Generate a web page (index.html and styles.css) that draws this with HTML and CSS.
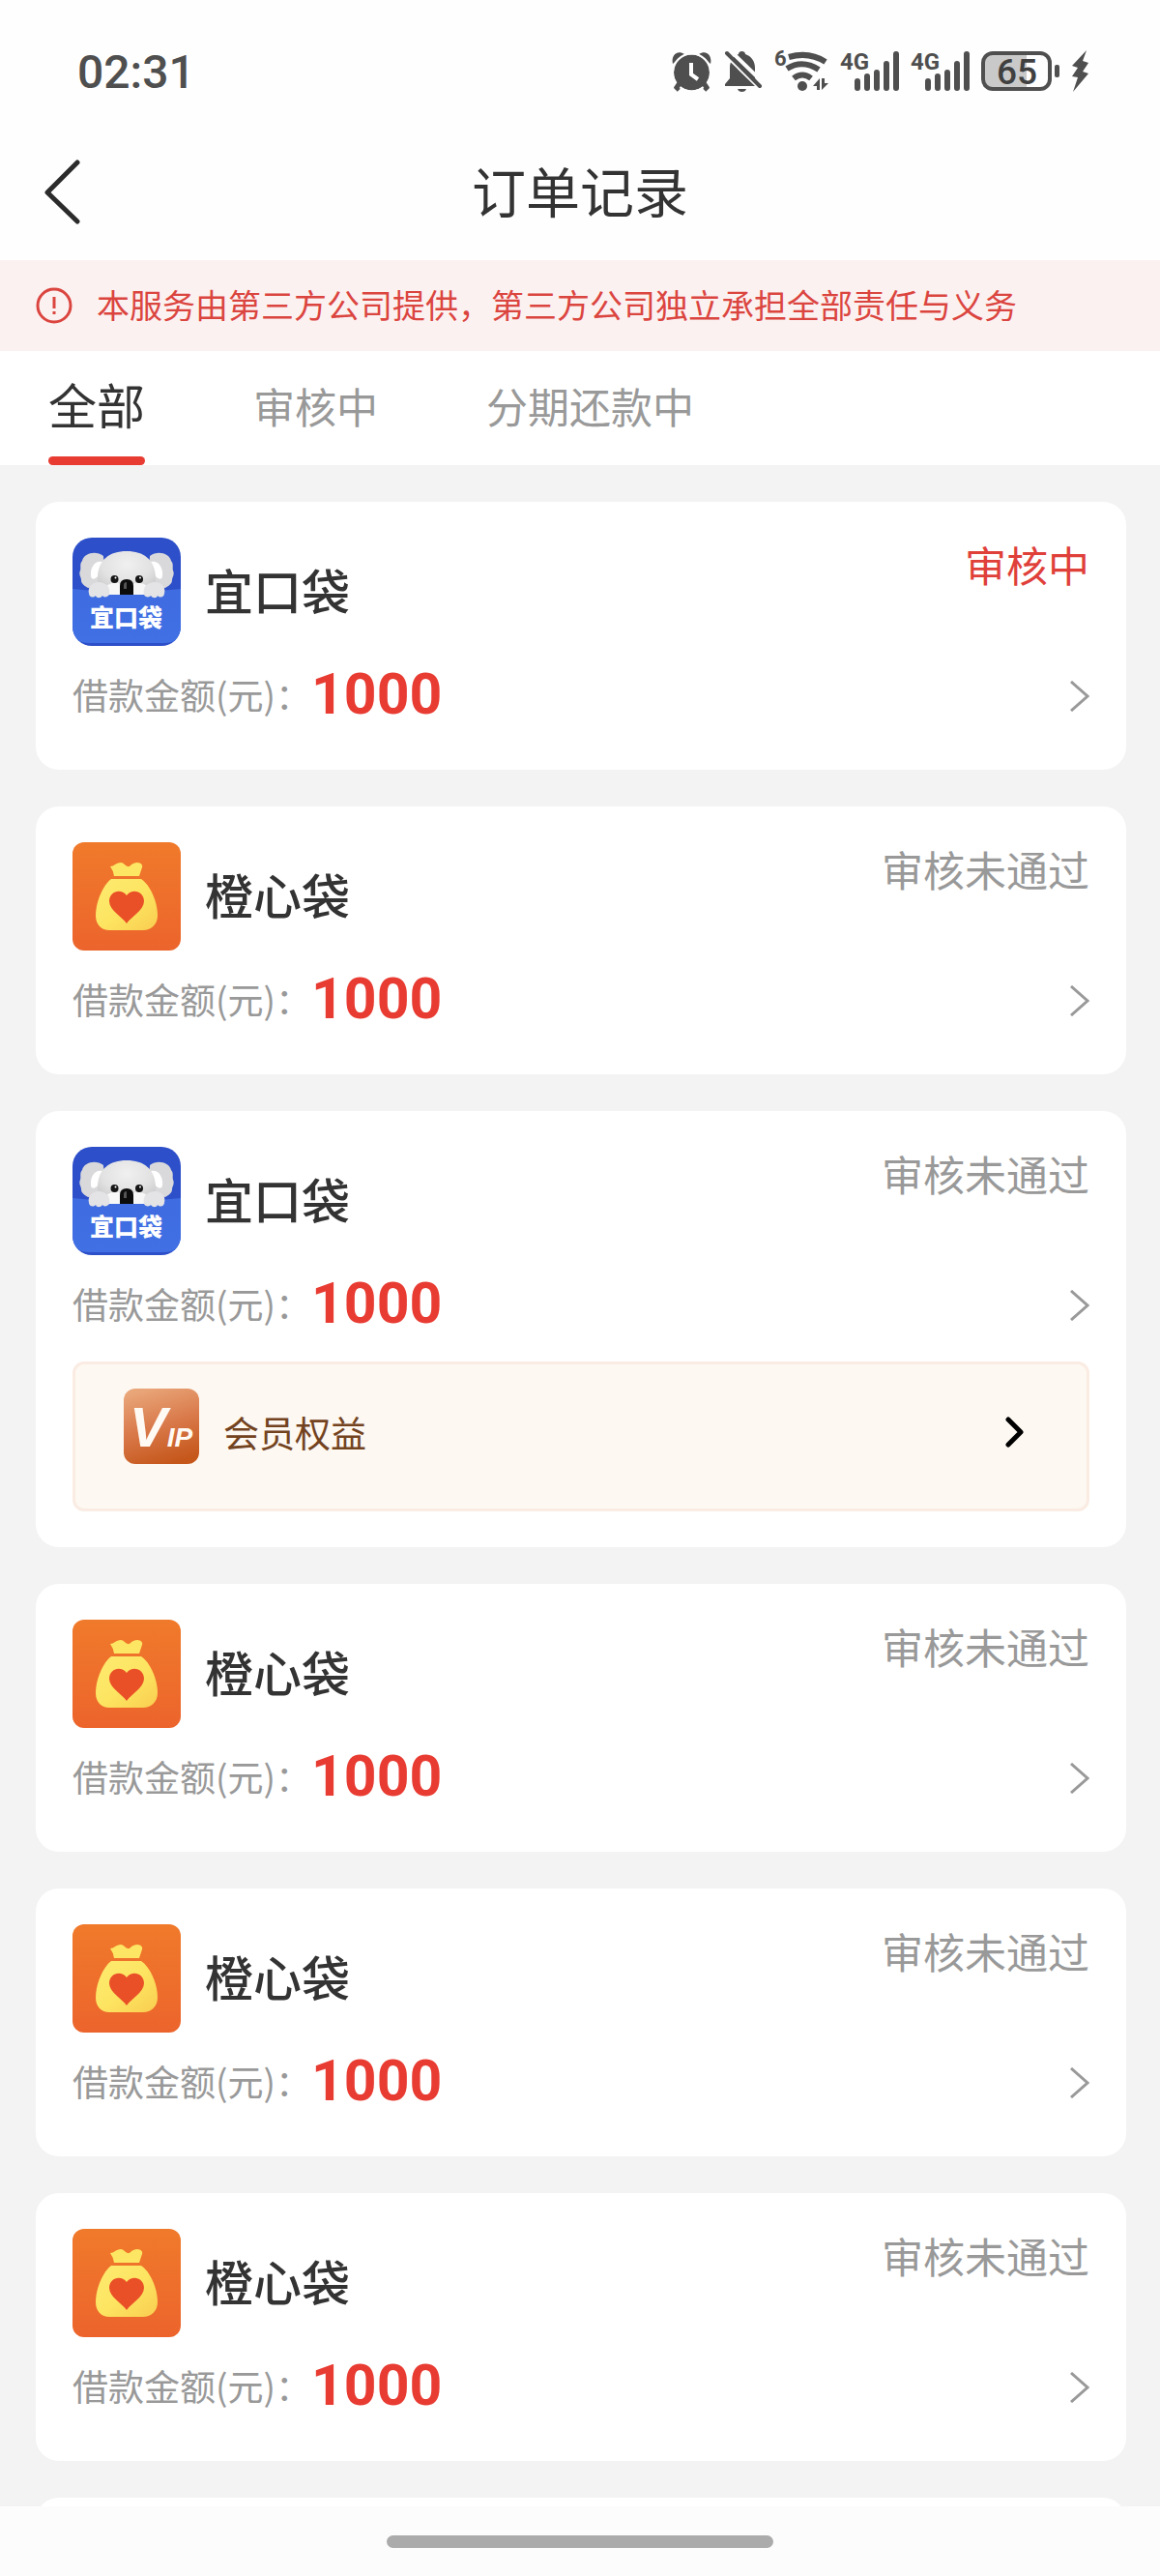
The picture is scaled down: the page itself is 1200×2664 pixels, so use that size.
FILE: index.html
```html
<!DOCTYPE html>
<html lang="zh-CN">
<head>
    <meta charset="UTF-8">
    <meta name="viewport" content="width=device-width, initial-scale=1.0">
    <title>订单记录</title>
    <link rel="stylesheet" href="styles.css">
</head>
<body>
    <svg class="defs" aria-hidden="true">
        <defs>
            <linearGradient id="pocket" x1="0" y1="0" x2="0" y2="1">
                <stop offset="0" stop-color="#3f6ce0"/>
                <stop offset="1" stop-color="#4070e4"/>
            </linearGradient>
            <radialGradient id="fur" cx=".5" cy=".3" r=".7">
                <stop offset="0" stop-color="#f0f0f0"/>
                <stop offset=".6" stop-color="#e2e2e2"/>
                <stop offset="1" stop-color="#c9c9cb"/>
            </radialGradient>
            <linearGradient id="orange" x1="0" y1="0" x2="0" y2="1">
                <stop offset="0" stop-color="#f07a2b"/>
                <stop offset="1" stop-color="#ec642c"/>
            </linearGradient>
            <linearGradient id="bag" x1="0" y1="0" x2="1" y2="1">
                <stop offset="0" stop-color="#fdea70"/>
                <stop offset=".5" stop-color="#fde562"/>
                <stop offset="1" stop-color="#f9cd50"/>
            </linearGradient>
            <linearGradient id="gold" x1=".3" y1="0" x2=".6" y2="1">
                <stop offset="0" stop-color="#e9a679"/>
                <stop offset=".5" stop-color="#d9794a"/>
                <stop offset="1" stop-color="#c5571b"/>
            </linearGradient>
            <clipPath id="round"><rect width="112" height="112" rx="20"/></clipPath>
        </defs>
        <symbol id="koala" viewBox="0 0 112 112">
            <g clip-path="url(#round)">
                <rect width="112" height="112" fill="#2d4fc9"/>
                <path d="M0 53Q56 60 112 53V96Q111 109 94 109H18Q1 109 0 96Z" fill="url(#pocket)"/>
                <path d="M32 19C24 13 12 16 10 24C7 27 9 31 8 34C6 38 9 41 9 44C9 48 13 50 16 52L34 50Z" fill="#d9d9db"/>
                <path d="M80 19C88 13 100 16 102 24C105 27 103 31 104 34C106 38 103 41 103 44C103 48 99 50 96 52L78 50Z" fill="#d9d9db"/>
                <path d="M31 25C23 23 18 31 19 40C20 45 25 43 29 36Z" fill="#fff"/>
                <path d="M81 25C89 23 94 31 93 40C92 45 87 43 83 36Z" fill="#fff"/>
                <path d="M56 14C38 14 27 23 26 40C25 50 32 58 40 59H72C80 58 87 50 86 40C85 23 74 14 56 14Z" fill="url(#fur)"/>
                <path d="M36 49Q44 45 50 48V59H38ZM76 49Q68 45 62 48V59H74Z" fill="#f7f7f7"/>
                <circle cx="43.500" cy="43" r="4" fill="#151515"/>
                <circle cx="69" cy="43" r="4" fill="#151515"/>
                <circle cx="44.500" cy="41.500" r="1" fill="#fff"/>
                <circle cx="70" cy="41.500" r="1" fill="#fff"/>
                <path d="M49 59V50Q49 43 56 43T63 50V59Z" fill="#0c0c0c"/>
                <path d="M53 49Q53 46 56 46V53H53Z" fill="#555"/>
                <path d="M17 58C15 50 22 46 27 46C34 46 40 51 38 59C36 62 32 62 31 60C29 63 25 63 24 60C21 63 17 61 17 58Z" fill="#e4e4e6"/>
                <path d="M74 59C72 51 78 46 85 46C91 46 97 50 95 58C95 61 91 63 88 60C87 63 83 63 81 60C80 62 75 62 74 59Z" fill="#e4e4e6"/>
                <text class="koala-text" x="18" y="92">宜口袋</text>
            </g>
        </symbol>
        <symbol id="heart-bag" viewBox="0 0 112 112">
            <rect width="112" height="112" rx="12" fill="url(#orange)"/>
            <path d="M39 25C43 25 45 21 50 21C53 21 54 24 57 25C60 26 61 21 67 21C71 21 73 24 72 26L69 35H43Q42 29 39 25Z" fill="#fde663"/>
            <path d="M40 38H71C80 44 88 61 88 76C88 85 81 91 73 91H38C30 91 24 85 24 76C24 61 32 44 40 38Z" fill="url(#bag)"/>
            <path d="M56 84C51 77 38 70 38 61C38 51 50 47 56 55C62 47 74 51 74 61C74 70 61 77 56 84Z" fill="#ea5027"/>
        </symbol>
        <symbol id="arrow" viewBox="0 0 20 32">
            <path d="M1 1L18 16L1 31" fill="none" stroke="#999" stroke-width="3"/>
        </symbol>
        <symbol id="signal-bars" viewBox="0 0 61 48">
            <path d="M18 34V41M28 29V41M38 25V41M48 16V41M58 6V41" stroke="#4f4f4f" stroke-width="6" stroke-linecap="round"/>
        </symbol>
    </svg>

    <div class="page">
        <div class="status-bar">
            <span class="time">02:31</span>
            <div class="status-icons">
                <svg width="42" height="48" viewBox="0 0 42 48" aria-hidden="true">
                    <path d="M8 39L4 43M33 39L37 43" stroke="#4f4f4f" stroke-width="5"/>
                    <circle cx="20.500" cy="25" r="18.500" fill="#4f4f4f"/>
                    <path d="M1 16C-1 8 5 1 13 6ZM40 16C42 8 36 1 28 6Z" fill="#4f4f4f"/>
                    <circle cx="20.500" cy="25" r="19.500" fill="none" stroke="#fefefe" stroke-width="2"/>
                    <path d="M8 36L4 42M33 36L37 42" stroke="#4f4f4f" stroke-width="5"/>
                    <path d="M20 15V27L27 32" fill="none" stroke="#fff" stroke-width="4"/>
                </svg>
                <svg width="40" height="48" viewBox="0 0 40 48" aria-hidden="true">
                    <path d="M1 39V37L6 31V20C6 13 10 8 15 6C15 2 22 2 22 6C28 8 32 13 32 20V31L38 39Z" fill="#4f4f4f"/>
                    <path d="M14 42H23Q22 45 18.500 45T14 42Z" fill="#4f4f4f"/>
                    <path d="M5 1L43 38M-2 3L38 42" stroke="#fefefe" stroke-width="4"/>
                    <path d="M3 5L37 39" stroke="#4f4f4f" stroke-width="4" stroke-linecap="round"/>
                </svg>
                <svg width="56" height="48" viewBox="0 0 56 48" aria-hidden="true">
                    <text class="wifi-text" x="0" y="18">6</text>
                    <circle cx="29" cy="39" r="5" fill="#4f4f4f"/>
                    <path d="M15 9Q36 3 53 14M13 21Q29 11 46 22M20 31Q29 24 38 31" fill="none" stroke="#4f4f4f" stroke-width="6"/>
                    <path d="M40 39L47 31V43H44V39ZM49 31H52V36H56L49 43Z" fill="#4f4f4f"/>
                </svg>
                <svg width="61" height="48" viewBox="0 0 61 48" aria-hidden="true">
                    <text class="net-text" x="0" y="22">4G</text>
                    <use href="#signal-bars"/>
                </svg>
                <svg width="61" height="48" viewBox="0 0 61 48" aria-hidden="true">
                    <text class="net-text" x="0" y="22">4G</text>
                    <use href="#signal-bars"/>
                </svg>
                <svg width="82" height="48" viewBox="0 0 82 48" aria-hidden="true">
                    <path d="M12 5H47V42H12Q2 42 2 32V15Q2 5 12 5Z" fill="#c9c9c9"/>
                    <rect x="2" y="5" width="69" height="37" rx="10" fill="none" stroke="#4f4f4f" stroke-width="4"/>
                    <rect x="76" y="17" width="5" height="13" rx="2" fill="#4f4f4f"/>
                    <text class="battery-text" x="37" y="37" text-anchor="middle">65</text>
                </svg>
                <svg width="17" height="48" viewBox="0 0 17 48" aria-hidden="true">
                    <path d="M15 2L0 18L6 20L0 29L6 30L1 45L17 26L11 24L17 15L11 13Z" fill="#4f4f4f"/>
                </svg>
            </div>
        </div>

        <header class="header">
            <button class="back" type="button" aria-label="返回">
                <svg width="38" height="68" viewBox="0 0 38 68"><path d="M34 3L3 34L34 64" fill="none" stroke="#2b2b2b" stroke-width="5" stroke-linecap="round" stroke-linejoin="round"/></svg>
            </button>
            <h1 class="title">订单记录</h1>
        </header>

        <div class="notice">
            <svg width="38" height="38" viewBox="0 0 38 38" aria-hidden="true">
                <circle cx="19" cy="19" r="17" fill="none" stroke="#db453f" stroke-width="3"/>
                <path d="M19 10V22M19 25V28" stroke="#db453f" stroke-width="3"/>
            </svg>
            <p>本服务由第三方公司提供，第三方公司独立承担全部责任与义务</p>
        </div>

        <nav class="tabs">
            <button class="tab active" type="button">全部</button>
            <button class="tab" type="button">审核中</button>
            <button class="tab" type="button">分期还款中</button>
        </nav>

        <main class="list">
            <section class="card">
                <div class="card-top">
                    <svg class="logo" aria-hidden="true"><use href="#koala"/></svg>
                    <h2 class="name">宜口袋</h2>
                    <span class="state doing">审核中</span>
                </div>
                <a class="amount" href="#">
                    <span class="label">借款金额(元)：</span>
                    <strong class="num">1000</strong>
                    <svg class="arrow" aria-hidden="true"><use href="#arrow"/></svg>
                </a>
            </section>

            <section class="card">
                <div class="card-top">
                    <svg class="logo" aria-hidden="true"><use href="#heart-bag"/></svg>
                    <h2 class="name">橙心袋</h2>
                    <span class="state">审核未通过</span>
                </div>
                <a class="amount" href="#">
                    <span class="label">借款金额(元)：</span>
                    <strong class="num">1000</strong>
                    <svg class="arrow" aria-hidden="true"><use href="#arrow"/></svg>
                </a>
            </section>

            <section class="card">
                <div class="card-top">
                    <svg class="logo" aria-hidden="true"><use href="#koala"/></svg>
                    <h2 class="name">宜口袋</h2>
                    <span class="state">审核未通过</span>
                </div>
                <a class="amount" href="#">
                    <span class="label">借款金额(元)：</span>
                    <strong class="num">1000</strong>
                    <svg class="arrow" aria-hidden="true"><use href="#arrow"/></svg>
                </a>
                <a class="vip" href="#">
                    <svg width="78" height="78" viewBox="0 0 78 78" aria-hidden="true">
                        <rect width="78" height="78" rx="12" fill="url(#gold)"/>
                        <text class="vip-text" x="6" y="60">V<tspan class="vip-small">IP</tspan></text>
                    </svg>
                    <span>会员权益</span>
                    <svg class="vip-arrow" width="20" height="34" viewBox="0 0 20 34" aria-hidden="true"><path d="M4 4L17 17L4 30" fill="none" stroke="#000" stroke-width="5" stroke-linecap="round" stroke-linejoin="round"/></svg>
                </a>
            </section>

            <section class="card">
                <div class="card-top">
                    <svg class="logo" aria-hidden="true"><use href="#heart-bag"/></svg>
                    <h2 class="name">橙心袋</h2>
                    <span class="state">审核未通过</span>
                </div>
                <a class="amount" href="#">
                    <span class="label">借款金额(元)：</span>
                    <strong class="num">1000</strong>
                    <svg class="arrow" aria-hidden="true"><use href="#arrow"/></svg>
                </a>
            </section>

            <section class="card">
                <div class="card-top">
                    <svg class="logo" aria-hidden="true"><use href="#heart-bag"/></svg>
                    <h2 class="name">橙心袋</h2>
                    <span class="state">审核未通过</span>
                </div>
                <a class="amount" href="#">
                    <span class="label">借款金额(元)：</span>
                    <strong class="num">1000</strong>
                    <svg class="arrow" aria-hidden="true"><use href="#arrow"/></svg>
                </a>
            </section>

            <section class="card">
                <div class="card-top">
                    <svg class="logo" aria-hidden="true"><use href="#heart-bag"/></svg>
                    <h2 class="name">橙心袋</h2>
                    <span class="state">审核未通过</span>
                </div>
                <a class="amount" href="#">
                    <span class="label">借款金额(元)：</span>
                    <strong class="num">1000</strong>
                    <svg class="arrow" aria-hidden="true"><use href="#arrow"/></svg>
                </a>
            </section>

            <section class="card"></section>
        </main>

        <footer class="home-bar"><i></i></footer>
    </div>
</body>
</html>
```
FILE: styles.css
```css
*{
    box-sizing: border-box;
}
body{
    margin: 0;
    font-family: "Noto Sans CJK SC", sans-serif;
    color: #333;
    background: #f3f3f3;
}
h1,h2,p{
    margin: 0;
}
a{
    color: inherit;
    text-decoration: none;
}
button{
    padding: 0;
    border: 0;
    background: none;
    font-family: inherit;
    color: inherit;
}
svg{
    display: block;
    flex-shrink: 0;
}
.defs{
    position: absolute;
    width: 0;
    height: 0;
}
.page{
    display: flex;
    flex-direction: column;
    height: 100vh;
    overflow: hidden;
}

/* 状态栏 */
.status-bar{
    display: flex;
    flex-shrink: 0;
    justify-content: space-between;
    align-items: center;
    height: 128px;
    padding: 20px 74px 0 80px;
    background: #fefefe;
    color: #4f4f4f;
}
.time{
    font: 500 48px Roboto, sans-serif;
}
.status-icons{
    display: flex;
    gap: 12px;
}
.net-text{
    font: 700 24px Roboto, sans-serif;
    fill: #4f4f4f;
}
.wifi-text{
    font: 700 22px Roboto, sans-serif;
    fill: #4f4f4f;
}
.battery-text{
    font: 500 37px Roboto, sans-serif;
    fill: #404040;
}

/* 标题 */
.header{
    display: grid;
    grid-template-columns: 1fr auto 1fr;
    align-items: center;
    flex-shrink: 0;
    height: 141px;
    padding: 0 46px;
    background: #fefefe;
}
.back{
    justify-self: start;
}
.title{
    padding-bottom: 6px;
    font-size: 56px;
    line-height: 80px;
    font-weight: 400;
}
.notice{
    display: flex;
    align-items: center;
    flex-shrink: 0;
    gap: 25px;
    height: 94px;
    padding: 0 37px;
    background: #fcf1f1;
    color: #db453f;
    font-size: 34px;
}
.notice p{
    padding-bottom: 4px;
}

/* 选项卡 */
.tabs{
    display: flex;
    flex-shrink: 0;
    gap: 112px;
    height: 118px;
    padding: 0 50px;
    background: #fff;
}
.tab{
    border-bottom: 7px solid transparent;
    font-size: 43px;
    color: #999;
}
.tab.active{
    display: flex;
    flex-direction: column;
    align-items: center;
    justify-content: space-between;
    border: 0;
    font-size: 50px;
    line-height: 109px;
    color: #333;
}
.tab.active::after{
    content: "";
    width: 100%;
    height: 9px;
    border-radius: 5px;
    background: #e83c33;
}

/* 订单列表 */
.list{
    display: flex;
    flex: 1;
    flex-direction: column;
    gap: 38px;
    min-height: 0;
    padding: 38px 35px 0 37px;
    overflow: hidden;
}
.card{
    flex-shrink: 0;
    padding: 37px 38px;
    border-radius: 24px;
    background: #fff;
}
.card-top{
    display: flex;
    align-items: center;
}
.logo{
    width: 112px;
    height: 112px;
    margin-right: 25px;
}
.koala-text{
    font: 900 25px "Noto Sans CJK SC", sans-serif;
    fill: #fff;
}
.name{
    padding-bottom: 6px;
    font-size: 50px;
    font-weight: 500;
    line-height: 72px;
}
.state{
    align-self: flex-start;
    margin-left: auto;
    font-size: 43px;
    line-height: 54px;
    color: #999;
}
.doing{
    color: #e0403a;
}
.amount{
    display: flex;
    align-items: center;
    height: 79px;
    margin-top: 12px;
}
.label{
    padding-bottom: 4px;
    font-size: 37px;
    color: #999;
}
.num{
    padding-bottom: 4px;
    font: 700 59px Roboto, sans-serif;
    color: #e83c33;
}
.arrow{
    width: 20px;
    height: 32px;
    margin-left: auto;
}
.vip{
    display: flex;
    align-items: center;
    gap: 25px;
    height: 155px;
    margin-top: 19px;
    padding: 25px 65px 35px 50px;
    border: 3px solid #faece3;
    border-radius: 12px;
    background: #fdf8f1;
    color: #73431f;
    font-size: 37px;
}
.vip svg:first-child{
    align-self: flex-start;
}
.vip-arrow{
    margin-left: auto;
}
.vip-text{
    font: italic 700 58px "Liberation Sans", sans-serif;
    fill: #fffaf3;
}
.vip-small{
    font-size: 28px;
}

.home-bar{
    display: flex;
    justify-content: center;
    align-items: center;
    flex-shrink: 0;
    height: 72px;
    background: #fcfcfc;
}
.home-bar i{
    width: 400px;
    height: 13px;
    border-radius: 7px;
    background: #ababab;
}
```
